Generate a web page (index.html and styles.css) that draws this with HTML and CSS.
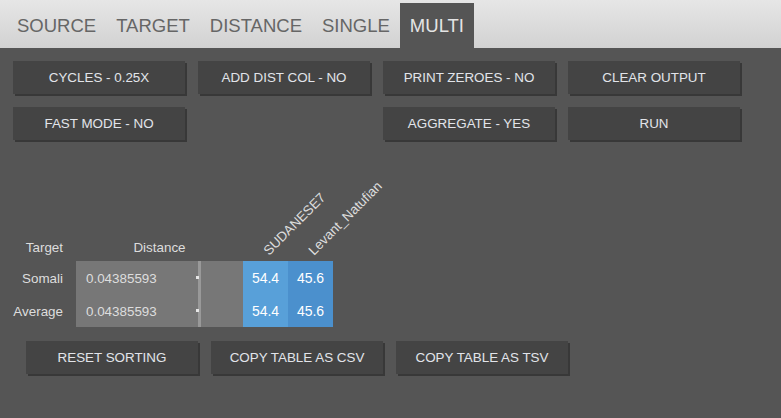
FILE: index.html
```html
<!DOCTYPE html>
<html>
<head>
<meta charset="utf-8">
<link rel="stylesheet" href="styles.css">
</head>
<body>
<div class="tabs">
  <span class="tab">SOURCE</span>
  <span class="tab">TARGET</span>
  <span class="tab">DISTANCE</span>
  <span class="tab">SINGLE</span>
  <span class="tab active">MULTI</span>
</div>
<div class="controls">
  <button class="btn">CYCLES - 0.25X</button>
  <button class="btn">ADD DIST COL - NO</button>
  <button class="btn">PRINT ZEROES - NO</button>
  <button class="btn">CLEAR OUTPUT</button>
  <button class="btn">FAST MODE - NO</button>
  <button class="btn col3">AGGREGATE - YES</button>
  <button class="btn">RUN</button>
</div>
<table class="results">
  <thead>
    <tr>
      <th class="c-target">Target</th>
      <th class="c-dist">Distance</th>
      <th class="c-pop"><span class="rot">SUDANESE7</span></th>
      <th class="c-pop"><span class="rot">Levant_Natufian</span></th>
    </tr>
  </thead>
  <tbody>
    <tr>
      <td class="c-target">Somali</td>
      <td class="c-dist"><span class="val">0.04385593</span><span class="bar"></span><span class="dot"></span></td>
      <td class="c-pop p1">54.4</td>
      <td class="c-pop p2">45.6</td>
    </tr>
    <tr>
      <td class="c-target">Average</td>
      <td class="c-dist"><span class="val">0.04385593</span><span class="bar"></span><span class="dot"></span></td>
      <td class="c-pop p1">54.4</td>
      <td class="c-pop p2">45.6</td>
    </tr>
  </tbody>
</table>
<div class="actions">
  <button class="btn">RESET SORTING</button>
  <button class="btn">COPY TABLE AS CSV</button>
  <button class="btn">COPY TABLE AS TSV</button>
</div>
</body>
</html>
```

FILE: styles.css
```css
html, body {
  margin: 0;
  padding: 0;
  background: #555555;
  font-family: "Liberation Sans", Arial, sans-serif;
  height: 100%;
}

.tabs {
  display: flex;
  align-items: flex-end;
  height: 48px;
  padding-left: 7px;
  background: linear-gradient(#e6e6e6, #d2d2d2);
  box-sizing: border-box;
}

.tab {
  display: flex;
  align-items: center;
  height: 45px;
  padding: 0 10px;
  font-size: 18.5px;
  color: #666666;
  padding-top: 1px;
  box-sizing: border-box;
}

.tab.active {
  background: #555555;
  color: #e4e4e4;
}

.controls {
  display: grid;
  grid-template-columns: repeat(4, 172px);
  grid-auto-rows: 33px;
  column-gap: 13px;
  row-gap: 13px;
  padding: 13px 0 0 13px;
}

.btn {
  border: none;
  margin: 0;
  padding: 0;
  background: #444444;
  color: #e2e4ea;
  font-family: "Liberation Sans", Arial, sans-serif;
  font-size: 13.4px;
  box-shadow: 2px 2px 0 #383838;
  height: 33px;
  width: 172px;
}

.col3 {
  grid-column: 3;
}

.results {
  border-collapse: collapse;
  margin: 97px 0 0 8px;
  font-size: 13.4px;
  color: #dddddd;
}

.results th {
  font-weight: normal;
  height: 24px;
  padding: 0 0 6px 0;
  vertical-align: bottom;
  line-height: 15px;
  box-sizing: border-box;
}

.results td {
  height: 33px;
  padding: 1px 0 0 0;
  box-sizing: border-box;
}

.c-target {
  width: 68px;
  text-align: right;
  padding-right: 13px !important;
  box-sizing: border-box;
}

.c-dist {
  width: 167px;
  text-align: center;
}

td.c-dist {
  position: relative;
  background: #777777;
  text-align: left;
  padding-left: 10px !important;
}

.bar {
  position: absolute;
  left: 122px;
  top: 0;
  width: 3px;
  height: 100%;
  background: #999999;
}

.dot {
  position: absolute;
  left: 120px;
  top: 15px;
  width: 3px;
  height: 3px;
  background: #e6e6e6;
}

.c-pop {
  width: 45px;
  min-width: 45px;
  max-width: 45px;
  text-align: center;
}

th.c-pop {
  position: relative;
}

.rot {
  position: absolute;
  left: 28px;
  bottom: 3px;
  white-space: nowrap;
  transform: rotate(-45deg);
  transform-origin: left bottom;
  line-height: 14px;
}

td.c-pop {
  color: #ffffff;
  font-size: 14px;
}

.p1 {
  background: #58a0d9;
}

.p2 {
  background: #4b90cd;
}

.actions {
  display: flex;
  gap: 13px;
  padding: 14px 0 0 26px;
}
```
